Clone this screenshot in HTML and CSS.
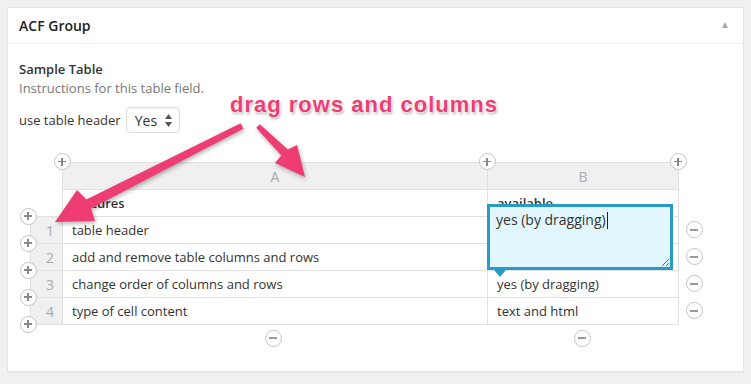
FILE: index.html
```html
<!DOCTYPE html>
<html lang="en">
<head>
  <meta charset="UTF-8" />
  <meta name="viewport" content="width=device-width, initial-scale=1.0" />
  <title>ACF Group</title>
  <link rel="stylesheet" href="styles.css">
</head>
<body>
  <div class="postbox">
    <div class="postbox-head">
      <h2>ACF Group</h2>
      <span class="toggle"></span>
    </div>
    <div class="inside">
      <div class="field-label">Sample Table</div>
      <p class="description">Instructions for this table field.</p>
      <div class="option">
        <span>use table header</span>
        <span class="select">Yes
          <svg width="7" height="13" viewBox="0 0 7 13"><path d="M3.5 0L7 5H0z M3.5 13L7 8H0z" fill="#555"/></svg>
        </span>
      </div>

      <div class="table-wrap">
        <table class="acf-table">
          <colgroup>
            <col class="col-num">
            <col class="col-a">
            <col class="col-b">
          </colgroup>
          <tr class="letters">
            <td class="corner"></td>
            <th>A</th>
            <th>B</th>
          </tr>
          <tr class="heads">
            <td class="corner"></td>
            <td>features</td>
            <td>available</td>
          </tr>
          <tr>
            <td class="num">1</td>
            <td>table header</td>
            <td></td>
          </tr>
          <tr>
            <td class="num">2</td>
            <td>add and remove table columns and rows</td>
            <td></td>
          </tr>
          <tr>
            <td class="num">3</td>
            <td>change order of columns and rows</td>
            <td>yes (by dragging)</td>
          </tr>
          <tr>
            <td class="num">4</td>
            <td>type of cell content</td>
            <td>text and html</td>
          </tr>
        </table>

        <span class="tbtn plus col-add-0"></span>
        <span class="tbtn plus col-add-1"></span>
        <span class="tbtn plus col-add-2"></span>

        <span class="tbtn plus row-add-0"></span>
        <span class="tbtn plus row-add-1"></span>
        <span class="tbtn plus row-add-2"></span>
        <span class="tbtn plus row-add-3"></span>
        <span class="tbtn plus row-add-4"></span>

        <span class="tbtn minus row-del-1"></span>
        <span class="tbtn minus row-del-2"></span>
        <span class="tbtn minus row-del-3"></span>
        <span class="tbtn minus row-del-4"></span>

        <span class="tbtn minus col-del-a"></span>
        <span class="tbtn minus col-del-b"></span>

        <div class="cell-editor">
          yes (by dragging)<span class="caret"></span>
          <svg class="grip" width="8" height="8" viewBox="0 0 8 8"><path d="M1 8L8 1M5 8L8 5" stroke="#666" stroke-width="1"/></svg>
        </div>
      </div>
    </div>
  </div>

  <div class="note">drag rows and columns</div>
  <svg class="arrows" width="751" height="384" viewBox="0 0 751 384">
    <path d="M240.6 123.3 L86.4 199.6 L77 190 L55 222 L95 221 L91 208.6 L243.4 128.7 Z" />
    <path d="M259.8 124.3 L287.9 149.5 L297 145 L305 177 L275 163 L281.3 155.5 L256.2 127.7 Z" />
  </svg>
</body>
</html>
```

FILE: styles.css
```css
body {
  margin: 0;
  padding: 7px;
  background-color: #f1f1f1;
  font-family: 'Open Sans', sans-serif;
  font-size: 13px;
  color: #444;
  position: relative;
}
.postbox {
  height: 365px;
  box-sizing: border-box;
  background-color: #fff;
  border: 1px solid #e5e5e5;
  box-shadow: 0 1px 1px rgba(0,0,0,0.04);
}
.postbox-head {
  height: 35px;
  display: flex;
  align-items: center;
  justify-content: space-between;
  padding: 0 15px 0 11px;
  border-bottom: 1px solid #eee;
}
.postbox-head h2 {
  margin: 0;
  font-size: 14px;
  font-weight: 600;
  color: #222;
}
.toggle {
  width: 0;
  height: 0;
  border-left: 3.5px solid transparent;
  border-right: 3.5px solid transparent;
  border-bottom: 6px solid #aaa;
  margin-top: -2px;
}
.inside {
  padding: 16px 11px 0;
}
.field-label {
  font-weight: 600;
  line-height: 18px;
  color: #333;
}
.description {
  margin: 1px 0 0;
  line-height: 18px;
  color: #777;
}
.option {
  display: flex;
  align-items: center;
  gap: 5px;
  margin-top: 10px;
  color: #333;
}
.select {
  width: 54px;
  height: 26px;
  box-sizing: border-box;
  display: flex;
  align-items: center;
  justify-content: space-between;
  padding: 0 7px 0 8px;
  border: 1px solid #ddd;
  border-radius: 4px;
  box-shadow: inset 0 1px 2px rgba(0,0,0,0.07);
  font-size: 14px;
  color: #333;
}
.table-wrap {
  position: relative;
  margin: 29px 0 0 11px;
}
.acf-table {
  border-collapse: collapse;
  table-layout: fixed;
  width: 649px;
}
.col-num { width: 32px; }
.col-a { width: 425px; }
.col-b { width: 191px; }
.acf-table td,
.acf-table th {
  height: 26px;
  padding: 0 9px;
  border: 1px solid #e1e1e1;
  font-size: 13px;
  font-weight: 400;
  color: #333;
  white-space: nowrap;
  overflow: hidden;
  text-align: left;
}
.acf-table td.corner {
  border: none;
  background: none;
}
.letters th {
  background-color: #f0f0f0;
  color: #aaa;
  text-align: center;
  font-size: 14px;
}
.heads td {
  font-weight: 600;
}
.acf-table td.num {
  background-color: #f0f0f0;
  color: #aaa;
  text-align: center;
  padding: 0 0 0 7px;
  font-size: 14px;
}
.tbtn {
  position: absolute;
  width: 17px;
  height: 17px;
  margin: -8.5px 0 0 -8.5px;
  box-sizing: border-box;
  border: 1px solid #c4c4c4;
  border-radius: 50%;
  background-color: #fff;
}
.tbtn::before,
.tbtn::after {
  content: "";
  position: absolute;
  left: 3.5px;
  top: 6.75px;
  width: 8px;
  height: 1.5px;
  background-color: #888;
}
.tbtn.plus::after {
  left: 6.75px;
  top: 3.5px;
  width: 1.5px;
  height: 8px;
}
.tbtn.minus::before {
  top: 6.5px;
  height: 2px;
  background-color: #999;
}
.tbtn.minus::after {
  display: none;
}
.col-add-0 { left: 32px; top: -0.5px; }
.col-add-1 { left: 457px; top: -0.5px; }
.col-add-2 { left: 648px; top: -0.5px; }
.row-add-0 { left: -2px; top: 54px; }
.row-add-1 { left: -2px; top: 81px; }
.row-add-2 { left: -2px; top: 108px; }
.row-add-3 { left: -2px; top: 135px; }
.row-add-4 { left: -2px; top: 162px; }
.row-del-1 { left: 664px; top: 67.5px; }
.row-del-2 { left: 664px; top: 94.5px; }
.row-del-3 { left: 664px; top: 121.5px; }
.row-del-4 { left: 664px; top: 148.5px; }
.col-del-a { left: 243px; top: 176px; }
.col-del-b { left: 552px; top: 176px; }
.cell-editor {
  position: absolute;
  left: 457px;
  top: 42px;
  width: 186px;
  height: 66px;
  box-sizing: border-box;
  padding: 3px 6px;
  border: 3px solid #2a9bc4;
  background-color: #e1f7fd;
  font-size: 14px;
  line-height: 20px;
  color: #333;
}
.cell-editor::after {
  content: "";
  position: absolute;
  left: 4px;
  top: calc(100% + 3px);
  width: 0;
  height: 0;
  border-left: 6.5px solid transparent;
  border-right: 6.5px solid transparent;
  border-top: 7px solid #2a9bc4;
}
.caret {
  display: inline-block;
  width: 1px;
  height: 17px;
  margin-left: 1px;
  vertical-align: -4px;
  background-color: #222;
}
.grip {
  position: absolute;
  right: 1px;
  bottom: 1px;
}
.note {
  position: absolute;
  left: 230px;
  top: 92px;
  font-family: 'Liberation Sans', Arial, sans-serif;
  font-weight: bold;
  font-size: 22px;
  line-height: 26px;
  letter-spacing: 1px;
  color: #ee3d72;
  white-space: nowrap;
  text-shadow: 0 0 1px #fff, 0 0 2px #fff, 0 0 2px #fff, 1px 2px 3px rgba(0,0,0,0.35);
}
.arrows {
  position: absolute;
  left: 0;
  top: 0;
  pointer-events: none;
  fill: #ee3d72;
  filter: drop-shadow(1px 2px 2px rgba(0,0,0,0.3));
}
```
